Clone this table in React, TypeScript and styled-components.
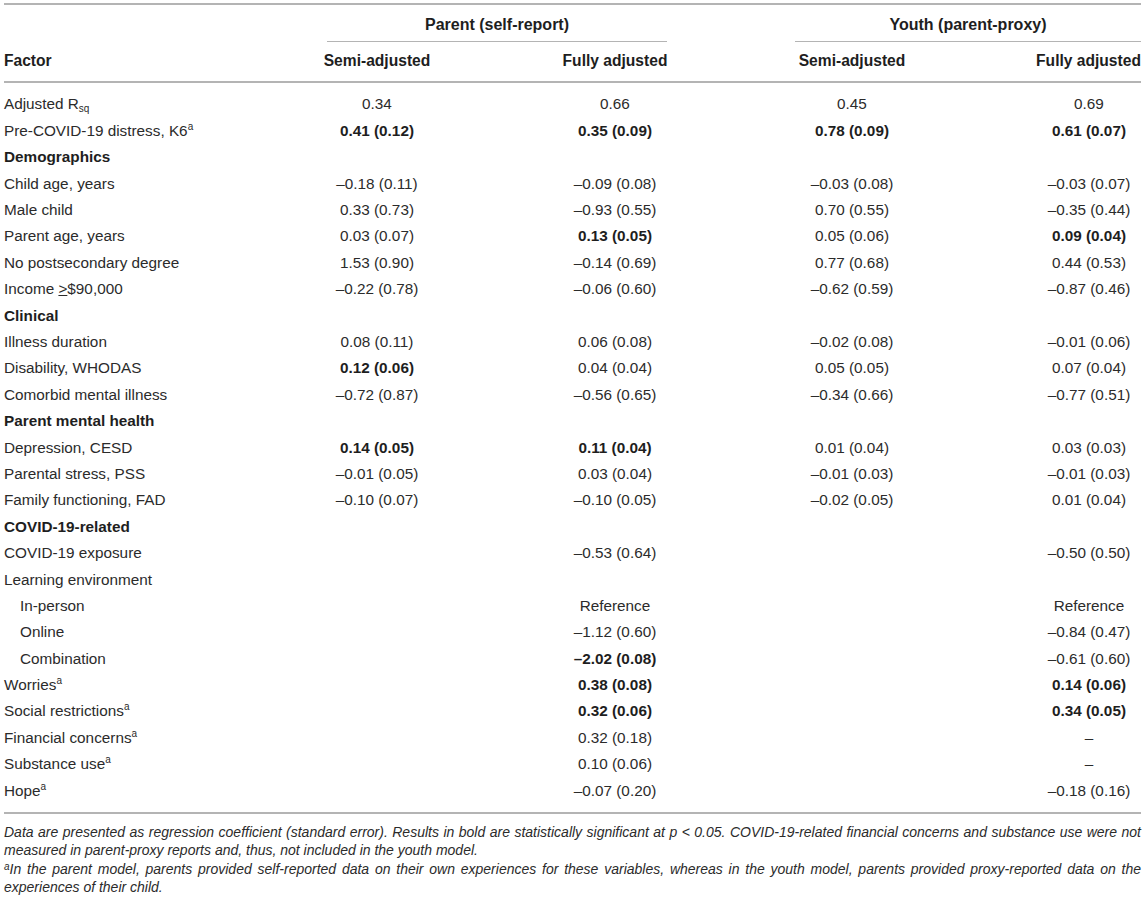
import React from "react";
import styled, { createGlobalStyle } from "styled-components";

const Global = createGlobalStyle`
  html, body { margin: 0; padding: 0; background: #fff; }
  body { font-family: "Liberation Sans", Arial, Helvetica, sans-serif; color: #2b2b2b; }
`;

const Page = styled.div`
  padding: 3px 4px 0 4px;
  width: 1137px;
`;

const Table = styled.div`
  border-top: 2px solid #b4b4b4;
  font-size: 15.3px;
`;

const COLS = "256px 234px 242px 232px 173px";

const GroupRow = styled.div`
  display: grid;
  grid-template-columns: 256px 476px 405px;
  padding-top: 11px;
`;

const GroupCell = styled.div<{ $ml: number; $mr: number }>`
  margin: 0 ${(p) => p.$mr}px 0 ${(p) => p.$ml}px;
  border-bottom: 1.5px solid #b4b4b4;
  text-align: center;
  font-weight: bold;
  font-size: 16px;
  color: #1e1e1e;
  line-height: 18px;
  padding-bottom: 7px;
`;

const HeadRow = styled.div`
  display: grid;
  grid-template-columns: ${COLS};
  align-items: center;
  height: 38.5px;
  border-bottom: 2px solid #b4b4b4;
`;

const HeadCell = styled.div<{ $left?: boolean; $last?: boolean }>`
  font-weight: bold;
  font-size: 15.6px;
  color: #1e1e1e;
  white-space: nowrap;
  text-align: ${(p) => (p.$left ? "left" : "center")};
  padding-left: ${(p) => (p.$last ? "68px" : "0")};
`;

const Body = styled.div`
  padding: 8.8px 0 8px 0;
  border-bottom: 2px solid #b4b4b4;
`;

const Row = styled.div`
  display: grid;
  grid-template-columns: ${COLS};
  align-items: center;
  height: 26.4px;
`;

const Label = styled.div<{ $section?: boolean; $indent?: boolean }>`
  white-space: nowrap;
  font-weight: ${(p) => (p.$section ? "bold" : "normal")};
  color: ${(p) => (p.$section ? "#1e1e1e" : "#2b2b2b")};
  padding-left: ${(p) => (p.$indent ? "16px" : "0")};
`;

const Value = styled.div<{ $bold?: boolean; $last?: boolean }>`
  white-space: nowrap;
  text-align: center;
  font-weight: ${(p) => (p.$bold ? "bold" : "normal")};
  color: ${(p) => (p.$bold ? "#1e1e1e" : "#2b2b2b")};
  padding-left: ${(p) => (p.$last ? "69px" : "0")};
`;

const Sup = styled.sup`
  font-size: 10px;
  line-height: 0;
  vertical-align: 6px;
`;

const NoteSup = styled.sup`
  font-size: 10px;
  line-height: 0;
  vertical-align: 4px;
`;

const Sub = styled.sub`
  font-size: 10px;
  line-height: 0;
  vertical-align: -3px;
`;

const Notes = styled.div`
  font-style: italic;
  font-size: 14px;
  line-height: 18.5px;
  text-align: justify;
  color: #2b2b2b;
  padding-top: 9px;
`;

const Note = styled.p`
  margin: 0;
`;

type RowDef =
  | { kind: "section"; label: string }
  | { kind: "data"; label: React.ReactNode; values: string[]; indent?: boolean };

const a = <Sup>a</Sup>;

const rows: RowDef[] = [
  { kind: "data", label: <>Adjusted R<Sub>sq</Sub></>, values: ["0.34", "0.66", "0.45", "0.69"] },
  { kind: "data", label: <>Pre-COVID-19 distress, K6{a}</>, values: ["*0.41 (0.12)", "*0.35 (0.09)", "*0.78 (0.09)", "*0.61 (0.07)"] },
  { kind: "section", label: "Demographics" },
  { kind: "data", label: "Child age, years", values: ["–0.18 (0.11)", "–0.09 (0.08)", "–0.03 (0.08)", "–0.03 (0.07)"] },
  { kind: "data", label: "Male child", values: ["0.33 (0.73)", "–0.93 (0.55)", "0.70 (0.55)", "–0.35 (0.44)"] },
  { kind: "data", label: "Parent age, years", values: ["0.03 (0.07)", "*0.13 (0.05)", "0.05 (0.06)", "*0.09 (0.04)"] },
  { kind: "data", label: "No postsecondary degree", values: ["1.53 (0.90)", "–0.14 (0.69)", "0.77 (0.68)", "0.44 (0.53)"] },
  { kind: "data", label: <>Income <u>&gt;</u>$90,000</>, values: ["–0.22 (0.78)", "–0.06 (0.60)", "–0.62 (0.59)", "–0.87 (0.46)"] },
  { kind: "section", label: "Clinical" },
  { kind: "data", label: "Illness duration", values: ["0.08 (0.11)", "0.06 (0.08)", "–0.02 (0.08)", "–0.01 (0.06)"] },
  { kind: "data", label: "Disability, WHODAS", values: ["*0.12 (0.06)", "0.04 (0.04)", "0.05 (0.05)", "0.07 (0.04)"] },
  { kind: "data", label: "Comorbid mental illness", values: ["–0.72 (0.87)", "–0.56 (0.65)", "–0.34 (0.66)", "–0.77 (0.51)"] },
  { kind: "section", label: "Parent mental health" },
  { kind: "data", label: "Depression, CESD", values: ["*0.14 (0.05)", "*0.11 (0.04)", "0.01 (0.04)", "0.03 (0.03)"] },
  { kind: "data", label: "Parental stress, PSS", values: ["–0.01 (0.05)", "0.03 (0.04)", "–0.01 (0.03)", "–0.01 (0.03)"] },
  { kind: "data", label: "Family functioning, FAD", values: ["–0.10 (0.07)", "–0.10 (0.05)", "–0.02 (0.05)", "0.01 (0.04)"] },
  { kind: "section", label: "COVID-19-related" },
  { kind: "data", label: "COVID-19 exposure", values: ["", "–0.53 (0.64)", "", "–0.50 (0.50)"] },
  { kind: "data", label: "Learning environment", values: ["", "", "", ""] },
  { kind: "data", label: "In-person", indent: true, values: ["", "Reference", "", "Reference"] },
  { kind: "data", label: "Online", indent: true, values: ["", "–1.12 (0.60)", "", "–0.84 (0.47)"] },
  { kind: "data", label: "Combination", indent: true, values: ["", "*–2.02 (0.08)", "", "–0.61 (0.60)"] },
  { kind: "data", label: <>Worries{a}</>, values: ["", "*0.38 (0.08)", "", "*0.14 (0.06)"] },
  { kind: "data", label: <>Social restrictions{a}</>, values: ["", "*0.32 (0.06)", "", "*0.34 (0.05)"] },
  { kind: "data", label: <>Financial concerns{a}</>, values: ["", "0.32 (0.18)", "", "–"] },
  { kind: "data", label: <>Substance use{a}</>, values: ["", "0.10 (0.06)", "", "–"] },
  { kind: "data", label: <>Hope{a}</>, values: ["", "–0.07 (0.20)", "", "–0.18 (0.16)"] },
];

export default function App() {
  return (
    <Page>
      <Global />
      <Table>
        <GroupRow>
          <div />
          <GroupCell $ml={67} $mr={69}>Parent (self-report)</GroupCell>
          <GroupCell $ml={59} $mr={0}>Youth (parent-proxy)</GroupCell>
        </GroupRow>
        <HeadRow>
          <HeadCell $left>Factor</HeadCell>
          <HeadCell>Semi-adjusted</HeadCell>
          <HeadCell>Fully adjusted</HeadCell>
          <HeadCell>Semi-adjusted</HeadCell>
          <HeadCell $last>Fully adjusted</HeadCell>
        </HeadRow>
        <Body>
          {rows.map((r, i) =>
            r.kind === "section" ? (
              <Row key={i}>
                <Label $section>{r.label}</Label>
              </Row>
            ) : (
              <Row key={i}>
                <Label $indent={r.indent}>{r.label}</Label>
                {r.values.map((v, j) => {
                  const bold = v.startsWith("*");
                  return (
                    <Value key={j} $bold={bold} $last={j === 3}>
                      {bold ? v.slice(1) : v}
                    </Value>
                  );
                })}
              </Row>
            )
          )}
        </Body>
      </Table>
      <Notes>
        <Note>
          Data are presented as regression coefficient (standard error). Results in bold are statistically
          significant at p &lt; 0.05. COVID-19-related financial concerns and substance use were not measured in
          parent-proxy reports and, thus, not included in the youth model.
        </Note>
        <Note>
          <NoteSup>a</NoteSup>In the parent model, parents provided self-reported data on their own experiences for these
          variables, whereas in the youth model, parents provided proxy-reported data on the experiences of their
          child.
        </Note>
      </Notes>
    </Page>
  );
}
